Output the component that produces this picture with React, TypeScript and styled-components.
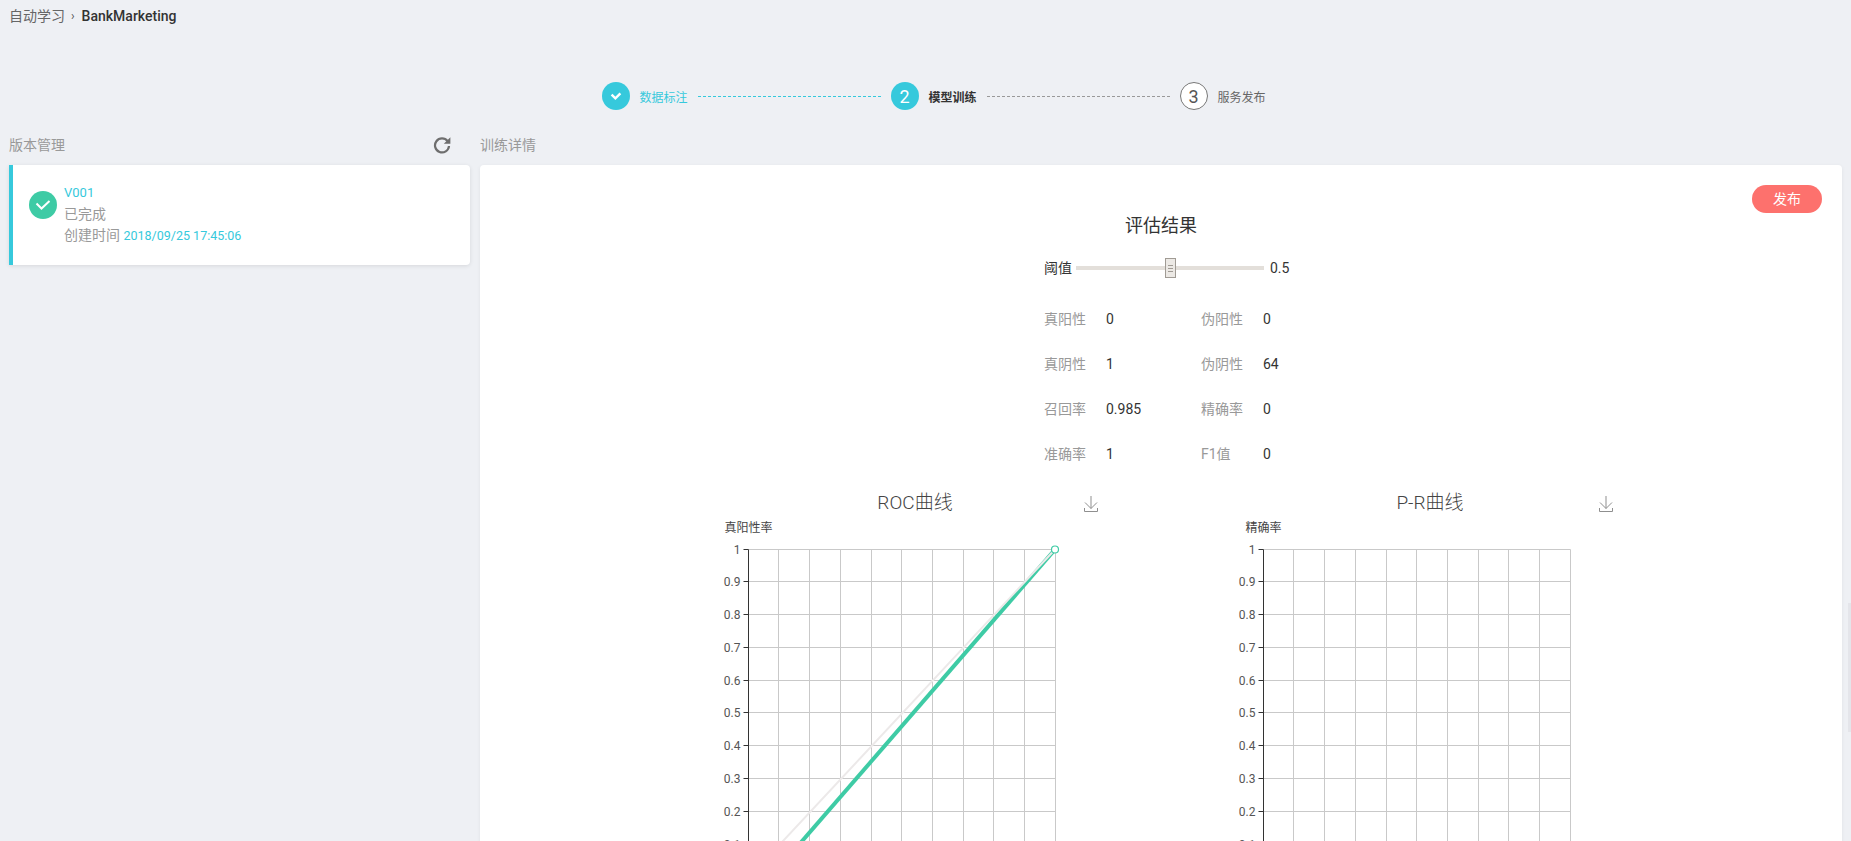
import styled, { createGlobalStyle } from 'styled-components';

const CYAN = '#36c9dc';
const GREEN = '#3ecba5';

const GlobalStyle = createGlobalStyle`
  html, body {
    margin: 0;
    height: 841px;
    overflow: hidden;
    background: #eef0f4;
    font-family: Roboto, "Noto Sans CJK SC", sans-serif;
    font-size: 14px;
    color: #333;
  }
  * { box-sizing: border-box; }
`;

const STATS = [
  ['真阳性', '0', '伪阳性', '0'],
  ['真阴性', '1', '伪阴性', '64'],
  ['召回率', '0.985', '精确率', '0'],
  ['准确率', '1', 'F1值', '0'],
];

const Y_TICKS = ['1', '0.9', '0.8', '0.7', '0.6', '0.5', '0.4', '0.3', '0.2', '0.1'];
const COLS = [30, 61, 92, 123, 153, 184, 215, 245, 276, 307];
const ROWS = [0, 32, 65, 98, 131, 163, 196, 229, 262, 295];

// Grid and axis shared by both charts
function ChartGrid({ children }: { children?: React.ReactNode }) {
  const left = 95.5;
  const top = 11.5;
  return (
    <svg width="501" height="340" viewBox="0 0 501 340" style={{ display: 'block' }}>
      <g stroke="#c9c9c9" strokeWidth="1" fill="none">
        {ROWS.map((r) => (
          <line key={r} x1={left} x2={left + 307} y1={top + r} y2={top + r} />
        ))}
        {COLS.map((c) => (
          <line key={c} x1={left + c} x2={left + c} y1={top} y2={340} />
        ))}
      </g>
      <line x1={left} x2={left} y1={top} y2={340} stroke="#333" strokeWidth="1" />
      {ROWS.map((r, i) => (
        <g key={r}>
          <line x1={left - 5} x2={left} y1={top + r} y2={top + r} stroke="#333" strokeWidth="1" />
          <text
            x={left - 8}
            y={top + r + 4.5}
            textAnchor="end"
            fontSize="12"
            fill="#555"
            fontFamily="Roboto, sans-serif"
          >
            {Y_TICKS[i]}
          </text>
        </g>
      ))}
      {children}
    </svg>
  );
}

function RefreshIcon() {
  return (
    <svg width="18" height="18" viewBox="0 0 18 18" style={{ display: 'block' }}>
      <path d="M14.6 5.2A7 7 0 1 0 16 10" fill="none" stroke="#6e6e6e" strokeWidth="2.2" />
      <path d="M17.4 1.2v6.6h-6.6z" fill="#6e6e6e" />
    </svg>
  );
}

function DownloadIcon() {
  return (
    <svg width="14" height="16" viewBox="0 0 14 16" style={{ display: 'block', marginTop: 1 }}>
      <path
        d="M7 0v12.5M1 6.5l6 6 6-6M0.5 12v3.5h13V12"
        fill="none"
        stroke="#8f8f8f"
        strokeWidth="1"
      />
    </svg>
  );
}

function Chevron() {
  return (
    <svg width="12" height="10" viewBox="0 0 12 10" style={{ display: 'block' }}>
      <path d="M1.6 3.6 5.4 7.4 10.4 2.4" fill="none" stroke="#fff" strokeWidth="2.4" />
    </svg>
  );
}

function CheckMark() {
  return (
    <svg width="16" height="12" viewBox="0 0 16 12" style={{ display: 'block' }}>
      <path d="M1.5 4.5 6.5 9.5 14.5 2" fill="none" stroke="#fff" strokeWidth="2" />
    </svg>
  );
}

export default function App() {
  return (
    <Page>
      <GlobalStyle />
      <Breadcrumb>
        <Crumb>自动学习</Crumb>
        <CrumbSep>›</CrumbSep>
        <CrumbCurrent>BankMarketing</CrumbCurrent>
      </Breadcrumb>

      <Stepper>
        <StepCircle $state="done"><Chevron /></StepCircle>
        <StepLabel $state="done">数据标注</StepLabel>
        <StepLine $color={CYAN} />
        <StepCircle $state="active">2</StepCircle>
        <StepLabel $state="active">模型训练</StepLabel>
        <StepLine $color="#999" />
        <StepCircle $state="todo">3</StepCircle>
        <StepLabel $state="todo">服务发布</StepLabel>
      </Stepper>

      <Columns>
        <LeftColumn>
          <SectionHeader>
            <SectionTitle>版本管理</SectionTitle>
            <RefreshIcon />
          </SectionHeader>
          <VersionCard>
            <StatusDot><CheckMark /></StatusDot>
            <VersionInfo>
              <VersionName>V001</VersionName>
              <VersionLine>已完成</VersionLine>
              <VersionLine>
                创建时间 <VersionDate>2018/09/25 17:45:06</VersionDate>
              </VersionLine>
            </VersionInfo>
          </VersionCard>
        </LeftColumn>

        <RightColumn>
          <SectionHeader>
            <SectionTitle>训练详情</SectionTitle>
          </SectionHeader>
          <DetailPanel>
            <PublishBar>
              <PublishButton>发布</PublishButton>
            </PublishBar>
            <ResultTitle>评估结果</ResultTitle>
            <SliderRow>
              <SliderLabel>阈值</SliderLabel>
              <SliderTrack>
                <SliderHandle>
                  <HandleBar />
                  <HandleBar />
                  <HandleBar />
                </SliderHandle>
              </SliderTrack>
              <SliderValue>0.5</SliderValue>
            </SliderRow>
            <StatsGrid>
              {STATS.map((row) => (
                <StatRow key={row[0]}>
                  <StatLabel>{row[0]}</StatLabel>
                  <StatValue>{row[1]}</StatValue>
                  <StatLabel>{row[2]}</StatLabel>
                  <StatValue>{row[3]}</StatValue>
                </StatRow>
              ))}
            </StatsGrid>
            <Charts>
              <ChartBlock>
                <ChartHeader>
                  <ChartTitle>ROC曲线</ChartTitle>
                  <DownloadIcon />
                </ChartHeader>
                <AxisLabel>真阳性率</AxisLabel>
                <ChartGrid>
                  <line x1="115" y1="342.4" x2="402" y2="11.5" stroke={GREEN} strokeWidth="4" />
                  <line x1="95.5" y1="340" x2="402" y2="11.5" stroke="#ece9e9" strokeWidth="2" />
                  <circle cx="402" cy="11.5" r="3.5" fill="#fff" stroke={GREEN} strokeWidth="1.2" />
                </ChartGrid>
              </ChartBlock>
              <ChartBlock>
                <ChartHeader>
                  <ChartTitle>P-R曲线</ChartTitle>
                  <DownloadIcon />
                </ChartHeader>
                <AxisLabel>精确率</AxisLabel>
                <ChartGrid />
              </ChartBlock>
            </Charts>
          </DetailPanel>
        </RightColumn>
      </Columns>
      <ScrollThumb />
    </Page>
  );
}

const Page = styled.div`
  position: relative;
  height: 841px;
  overflow: hidden;
`;

const Breadcrumb = styled.div`
  display: flex;
  align-items: center;
  height: 32px;
  padding-left: 9px;
  line-height: 20px;
`;

const Crumb = styled.span`
  color: #666;
`;

const CrumbSep = styled.span`
  margin: 0 7px 0 6px;
  color: #555;
  font-size: 12px;
`;

const CrumbCurrent = styled.span`
  color: #333;
  font-weight: 500;
`;

const Stepper = styled.div`
  display: flex;
  align-items: center;
  justify-content: center;
  height: 28px;
  margin-top: 50px;
  padding-left: 16px;
`;

type StepState = 'done' | 'active' | 'todo';

const StepCircle = styled.div<{ $state: StepState }>`
  display: flex;
  align-items: center;
  justify-content: center;
  width: 28px;
  height: 28px;
  border-radius: 50%;
  font-size: 18px;
  background: ${(p) => (p.$state === 'todo' ? '#fff' : CYAN)};
  border: ${(p) => (p.$state === 'todo' ? '1px solid #777' : 'none')};
  color: ${(p) => (p.$state === 'todo' ? '#555' : '#fff')};
`;

const StepLabel = styled.span<{ $state: StepState }>`
  width: 48px;
  margin-left: 10px;
  font-size: 12px;
  line-height: 16px;
  padding-top: 4px;
  white-space: nowrap;
  font-weight: ${(p) => (p.$state === 'active' ? 700 : 400)};
  color: ${(p) => (p.$state === 'done' ? CYAN : p.$state === 'active' ? '#333' : '#666')};
`;

const StepLine = styled.div<{ $color: string }>`
  width: 183px;
  margin: 0 10px;
  height: 1px;
  background: repeating-linear-gradient(to right, ${(p) => p.$color} 0 3px, transparent 3px 5px);
`;

const Columns = styled.div`
  display: grid;
  grid-template-columns: 461px 1362px;
  column-gap: 10px;
  padding-left: 9px;
  margin-top: 20px;
`;

const LeftColumn = styled.div``;

const RightColumn = styled.div``;

const SectionHeader = styled.div`
  display: flex;
  align-items: center;
  justify-content: space-between;
  height: 35px;
  padding-right: 19px;
  padding-bottom: 5px;
`;

const SectionTitle = styled.span`
  color: #999;
  line-height: 20px;
`;

const VersionCard = styled.div`
  display: flex;
  align-items: flex-start;
  height: 100px;
  padding: 18px 0 0 16px;
  background: #fff;
  border-left: 4px solid ${CYAN};
  border-radius: 0 4px 4px 0;
  box-shadow: 0 1px 4px rgba(0, 0, 0, 0.1);
`;

const StatusDot = styled.div`
  display: flex;
  align-items: center;
  justify-content: center;
  flex-shrink: 0;
  width: 28px;
  height: 28px;
  margin-top: 8px;
  border-radius: 50%;
  background: ${GREEN};
`;

const VersionInfo = styled.div`
  margin-left: 7px;
  display: flex;
  flex-direction: column;
  gap: 1px;
`;

const VersionName = styled.span`
  color: ${CYAN};
  font-size: 13px;
  line-height: 20px;
`;

const VersionLine = styled.span`
  color: #999;
  font-size: 14px;
  line-height: 20px;
`;

const VersionDate = styled.span`
  color: ${CYAN};
  font-size: 12.5px;
`;

const DetailPanel = styled.div`
  height: 700px;
  background: #fff;
  border-radius: 4px;
  box-shadow: 0 1px 4px rgba(0, 0, 0, 0.06);
`;

const PublishBar = styled.div`
  display: flex;
  justify-content: flex-end;
  height: 48px;
  padding: 20px 20px 0 0;
`;

const PublishButton = styled.button`
  width: 70px;
  height: 28px;
  padding: 0;
  border: none;
  border-radius: 14px;
  background: #fd716d;
  color: #fff;
  font-family: inherit;
  font-size: 14px;
  line-height: 20px;
`;

const ResultTitle = styled.h2`
  margin: 0;
  height: 26px;
  font-size: 18px;
  font-weight: 400;
  line-height: 26px;
  text-align: center;
  color: #333;
`;

const SliderRow = styled.div`
  display: flex;
  align-items: center;
  height: 22px;
  margin-top: 18px;
  padding-left: 564px;
`;

const SliderLabel = styled.span`
  width: 32px;
  color: #333;
  line-height: 20px;
`;

const SliderTrack = styled.div`
  position: relative;
  width: 188px;
  height: 4px;
  background: #e3dfda;
`;

const SliderHandle = styled.div`
  position: absolute;
  left: 89px;
  top: -8px;
  display: flex;
  flex-direction: column;
  align-items: center;
  justify-content: center;
  gap: 2px;
  width: 11px;
  height: 20px;
  background: #ece9e5;
  border: 1px solid #a09b94;
`;

const HandleBar = styled.i`
  display: block;
  width: 5px;
  height: 1px;
  background: #a09b94;
`;

const SliderValue = styled.span`
  margin-left: 6px;
  color: #333;
  line-height: 20px;
`;

const StatsGrid = styled.div`
  margin-top: 18px;
  padding-left: 564px;
`;

const StatRow = styled.div`
  display: grid;
  grid-template-columns: 62px 95px 62px auto;
  height: 45px;
  line-height: 45px;
  align-items: center;
`;

const StatLabel = styled.span`
  color: #999;
`;

const StatValue = styled.span`
  color: #333;
`;

const Charts = styled.div`
  display: flex;
  justify-content: center;
  gap: 14px;
  margin-top: 10px;
`;

const ChartBlock = styled.div`
  width: 501px;
`;

const ChartHeader = styled.div`
  display: grid;
  grid-template-columns: 431px 14px;
  align-items: center;
  height: 32px;
  color: #999;
`;

const ChartTitle = styled.h3`
  margin: 0;
  padding-left: 93px;
  font-size: 19px;
  font-weight: 300;
  line-height: 26px;
  text-align: center;
  color: #444;
`;

const AxisLabel = styled.div`
  width: 191px;
  height: 19px;
  font-size: 12px;
  line-height: 19px;
  text-align: center;
  color: #444;
`;

const ScrollThumb = styled.div`
  position: absolute;
  right: 0;
  top: 603px;
  width: 3px;
  height: 129px;
  background: #e4e5ea;
`;
